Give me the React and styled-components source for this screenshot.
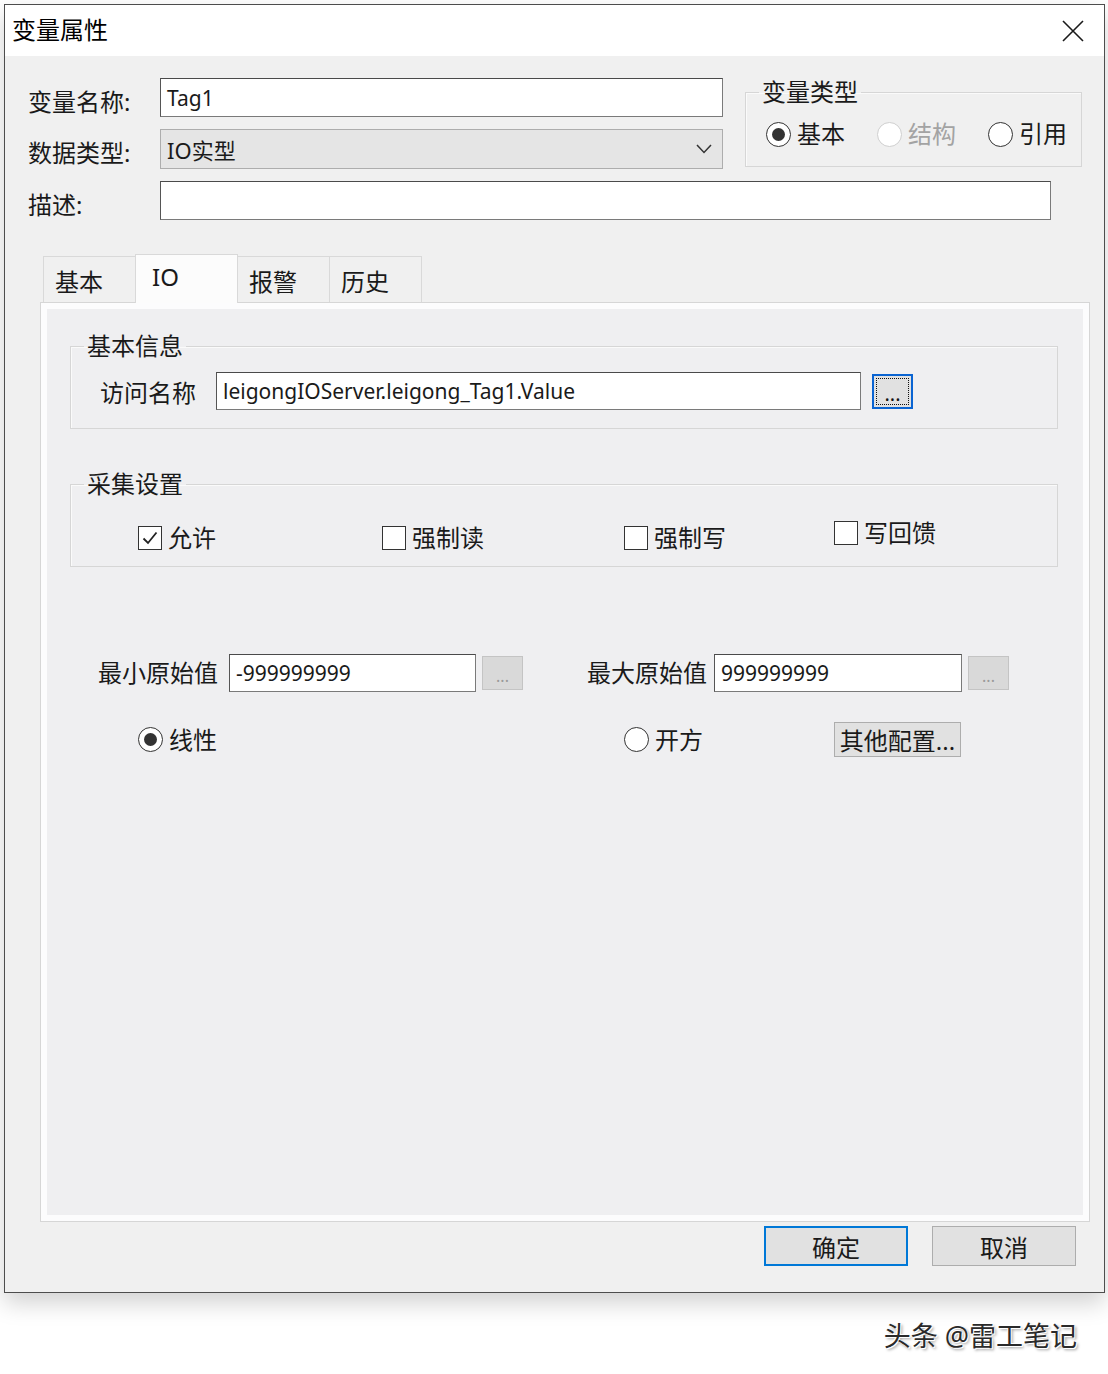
import React from "react";
import styled, { createGlobalStyle } from "styled-components";

const GlobalStyle = createGlobalStyle`
  body {
    margin: 0;
    background: #ffffff;
    font-family: "Noto Sans", "Noto Sans CJK SC", sans-serif;
    color: #1a1a1a;
  }
`;

const Page = styled.div`
  padding: 4px 3px 0 4px;
  display: flex;
  flex-direction: column;
`;

const Dialog = styled.div`
  width: 1101px;
  height: 1289px;
  box-sizing: border-box;
  border: 1px solid #4d4d4d;
  background: #f0f0f0;
  display: flex;
  flex-direction: column;
  box-shadow: 0 10px 22px rgba(0, 0, 0, 0.18);
`;

const TitleBar = styled.div`
  height: 51px;
  background: #ffffff;
  display: flex;
  align-items: center;
  justify-content: space-between;
  padding: 0 19px 0 7px;
`;

const Title = styled.div`
  font-size: 24px;
  color: #000;
  padding-bottom: 5px;
`;

const Body = styled.div`
  flex: 1;
  display: flex;
  flex-direction: column;
  padding-top: 22px;
`;

const TopForm = styled.div`
  display: grid;
  grid-template-columns: 132px 563px 22px 337px;
  grid-template-rows: 39px 40px 39px;
  row-gap: 12px;
  padding-left: 23px;
`;

const FieldLabel = styled.div`
  grid-column: 1;
  align-self: center;
  padding-top: 5px;
  font-size: 24px;
`;

const TextBox = styled.div`
  box-sizing: border-box;
  height: ${(p) => p.$h || 39}px;
  width: ${(p) => (p.$w ? `${p.$w}px` : "auto")};
  margin-left: ${(p) => p.$ml || 0}px;
  background: #ffffff;
  border: 1px solid #7a7a7a;
  border-top-color: #4a4a4a;
  border-left-color: #555;
  display: flex;
  align-items: center;
  padding-left: 6px;
  font-size: 21px;
  white-space: nowrap;
  overflow: hidden;
`;

const WideBox = styled(TextBox)`
  grid-column: 2 / 5;
  margin-right: 31px;
`;

const ComboBox = styled.div`
  box-sizing: border-box;
  background: #e5e5e5;
  border: 1px solid #adadad;
  display: flex;
  align-items: center;
  justify-content: space-between;
  padding: 0 10px 0 6px;
  font-size: 22px;
`;

const GroupBox = styled.fieldset`
  box-sizing: border-box;
  margin: ${(p) => p.$mt || 0}px 0 0 0;
  padding: 0;
  min-width: 0;
  height: ${(p) => p.$h}px;
  border: 1px solid #d6d6d6;
  box-shadow: inset 1px 1px 0 #fafafa;
`;

const TypeGroup = styled(GroupBox)`
  grid-column: 4;
  grid-row: 1 / 3;
  align-self: start;
`;

const Legend = styled.legend`
  margin-left: 13px;
  padding: 0 3px;
  font-size: 24px;
  line-height: 24px;
`;

const OptionRow = styled.div`
  display: flex;
  align-items: center;
  gap: 32px;
  margin-top: 15px;
  padding-left: 20px;
`;

const Option = styled.div`
  display: flex;
  align-items: center;
  gap: 6px;
  font-size: 24px;
  line-height: 30px;
  color: ${(p) => (p.$disabled ? "#a3a3a3" : "#1a1a1a")};
  margin-bottom: ${(p) => p.$lift || 0}px;
`;

const RadioMark = styled.span`
  box-sizing: border-box;
  width: 25px;
  height: 25px;
  border-radius: 50%;
  border: 1.6px solid ${(p) => (p.$disabled ? "#cfcfcf" : "#333")};
  background: #fff;
  display: flex;
  align-items: center;
  justify-content: center;
  &::after {
    content: "";
    width: 13px;
    height: 13px;
    border-radius: 50%;
    background: ${(p) => (p.$checked ? "#333" : "transparent")};
  }
`;

const CheckMark = styled.span`
  box-sizing: border-box;
  width: 24px;
  height: 24px;
  border: 1.6px solid #333;
  background: #fff;
  display: flex;
  align-items: center;
  justify-content: center;
`;

const TabArea = styled.div`
  margin: 34px 14px 0 35px;
  display: flex;
  flex-direction: column;
`;

const TabStrip = styled.div`
  display: flex;
  align-items: flex-end;
  height: 49px;
  padding-left: 4px;
  margin-bottom: -1px;
`;

const Tab = styled.div`
  box-sizing: border-box;
  width: ${(p) => p.$w}px;
  height: ${(p) => (p.$active ? 49 : 47)}px;
  margin-left: -1px;
  border: 1px solid #d9d9d9;
  border-bottom: none;
  background: ${(p) => (p.$active ? "#fcfcfc" : "#f0f0f0")};
  display: flex;
  align-items: center;
  padding-left: ${(p) => (p.$active ? 16 : 11)}px;
  padding-top: ${(p) => (p.$active ? 0 : 1)}px;
  padding-bottom: ${(p) => (p.$active ? 5 : 0)}px;
  font-size: 24px;
  position: relative;
  z-index: ${(p) => (p.$active ? 2 : 0)};
`;

const TabPanel = styled.div`
  box-sizing: border-box;
  height: 920px;
  border: 1px solid #d6d6d6;
  background: #efeff1;
  box-shadow: inset 0 0 0 6px #fcfcfd;
  position: relative;
  z-index: 1;
  padding: 31px 31px 0 29px;
  display: flex;
  flex-direction: column;
`;

const AccessRow = styled.div`
  display: flex;
  align-items: center;
  margin-top: 14px;
  padding-left: 29px;
  font-size: 24px;
`;

const CheckRow = styled.div`
  display: grid;
  grid-template-columns: 244px 242px 210px auto;
  align-items: center;
  height: 30px;
  margin-top: 22px;
  padding-left: 67px;
`;

const RangeRow = styled.div`
  display: flex;
  align-items: center;
  height: 38px;
  margin-top: 87px;
  padding-left: 28px;
  font-size: 24px;
`;

const RangeLabel = styled.span`
  margin-left: ${(p) => p.$ml || 0}px;
  padding-bottom: 4px;
`;

const ModeRow = styled.div`
  display: grid;
  grid-template-columns: 486px 210px auto;
  align-items: center;
  height: 35px;
  margin-top: 30px;
  padding-left: 68px;
`;

const DotsButton = styled.div`
  box-sizing: border-box;
  width: 41px;
  height: ${(p) => (p.$focused ? 35 : 34)}px;
  margin-left: ${(p) => p.$ml || 0}px;
  background: ${(p) => (p.$focused ? "#e1e1e1" : "#d9d9d9")};
  border: ${(p) => (p.$focused ? "2px solid #0a64d2" : "1px solid #c4c4c4")};
  color: ${(p) => (p.$focused ? "#111" : "#9a9a9a")};
  display: flex;
  align-items: flex-end;
  justify-content: center;
  font-size: ${(p) => (p.$focused ? 20 : 16)}px;
  line-height: 20px;
  padding-bottom: 3px;
  position: relative;
  &::after {
    content: "";
    display: ${(p) => (p.$focused ? "block" : "none")};
    position: absolute;
    inset: 2px;
    border: 1px dotted #111;
  }
`;

const PushButton = styled.div`
  box-sizing: border-box;
  width: ${(p) => p.$w}px;
  height: ${(p) => p.$h}px;
  background: #e1e1e1;
  border: ${(p) => (p.$default ? "2px solid #0078d7" : "1px solid #adadad")};
  display: flex;
  align-items: center;
  justify-content: center;
  font-size: 24px;
  white-space: nowrap;
`;

const Footer = styled.div`
  display: flex;
  justify-content: flex-end;
  gap: 24px;
  margin-top: 4px;
  padding-right: 28px;
`;

const Watermark = styled.div`
  align-self: flex-end;
  margin: 22px 28px 0 0;
  font-size: 27px;
  color: #2a2a2a;
  text-shadow: 1px 1px 0 #fff, -1px -1px 0 #fff, 2px 2px 3px rgba(0, 0, 0, 0.4);
`;

const CloseIcon = () => (
  <svg width="24" height="24" viewBox="0 0 24 24">
    <path d="M2 2 L22 22 M22 2 L2 22" stroke="#1a1a1a" strokeWidth="1.6" fill="none" />
  </svg>
);

const Chevron = () => (
  <svg width="16" height="10" viewBox="0 0 16 10">
    <polyline points="1,1 8,8.5 15,1" stroke="#333" strokeWidth="1.5" fill="none" />
  </svg>
);

const Radio = ({ checked, disabled, label }) => (
  <Option $disabled={disabled}>
    <RadioMark $checked={checked} $disabled={disabled} />
    {label}
  </Option>
);

const Check = ({ checked, label, lift }) => (
  <Option $lift={lift}>
    <CheckMark>
      {checked && (
        <svg width="18" height="18" viewBox="0 0 18 18">
          <polyline points="2.5,9.5 7,14 15.5,3.5" stroke="#222" strokeWidth="1.8" fill="none" />
        </svg>
      )}
    </CheckMark>
    {label}
  </Option>
);

const tabs = [
  { name: "基本", w: 93 },
  { name: "IO", w: 103, active: true },
  { name: "报警", w: 93 },
  { name: "历史", w: 93 },
];

export default function App() {
  return (
    <Page>
      <GlobalStyle />
      <Dialog>
        <TitleBar>
          <Title>变量属性</Title>
          <CloseIcon />
        </TitleBar>
        <Body>
          <TopForm>
            <FieldLabel>变量名称:</FieldLabel>
            <TextBox>Tag1</TextBox>
            <TypeGroup $h={87} $mt={2}>
              <Legend>变量类型</Legend>
              <OptionRow>
                <Radio checked label="基本" />
                <Radio disabled label="结构" />
                <Radio label="引用" />
              </OptionRow>
            </TypeGroup>
            <FieldLabel>数据类型:</FieldLabel>
            <ComboBox>
              <span>IO实型</span>
              <Chevron />
            </ComboBox>
            <FieldLabel>描述:</FieldLabel>
            <WideBox />
          </TopForm>

          <TabArea>
            <TabStrip>
              {tabs.map((t) => (
                <Tab key={t.name} $w={t.w} $active={t.active}>
                  {t.name}
                </Tab>
              ))}
            </TabStrip>
            <TabPanel>
              <GroupBox $h={95}>
                <Legend>基本信息</Legend>
                <AccessRow>
                  访问名称
                  <TextBox $w={645} $h={38} $ml={20}>
                    leigongIOServer.leigong_Tag1.Value
                  </TextBox>
                  <DotsButton $focused $ml={11}>...</DotsButton>
                </AccessRow>
              </GroupBox>

              <GroupBox $h={95} $mt={43}>
                <Legend>采集设置</Legend>
                <CheckRow>
                  <Check checked label="允许" />
                  <Check label="强制读" />
                  <Check label="强制写" />
                  <Check label="写回馈" lift={10} />
                </CheckRow>
              </GroupBox>

              <RangeRow>
                <RangeLabel>最小原始值</RangeLabel>
                <TextBox $w={247} $h={38} $ml={11}>-999999999</TextBox>
                <DotsButton $ml={6}>...</DotsButton>
                <RangeLabel $ml={64}>最大原始值</RangeLabel>
                <TextBox $w={248} $h={38} $ml={7}>999999999</TextBox>
                <DotsButton $ml={6}>...</DotsButton>
              </RangeRow>

              <ModeRow>
                <Radio checked label="线性" />
                <Radio label="开方" />
                <PushButton $w={127} $h={35}>其他配置...</PushButton>
              </ModeRow>
            </TabPanel>
          </TabArea>

          <Footer>
            <PushButton $default $w={144} $h={40}>确定</PushButton>
            <PushButton $w={144} $h={40}>取消</PushButton>
          </Footer>
        </Body>
      </Dialog>
      <Watermark>头条 @雷工笔记</Watermark>
    </Page>
  );
}
